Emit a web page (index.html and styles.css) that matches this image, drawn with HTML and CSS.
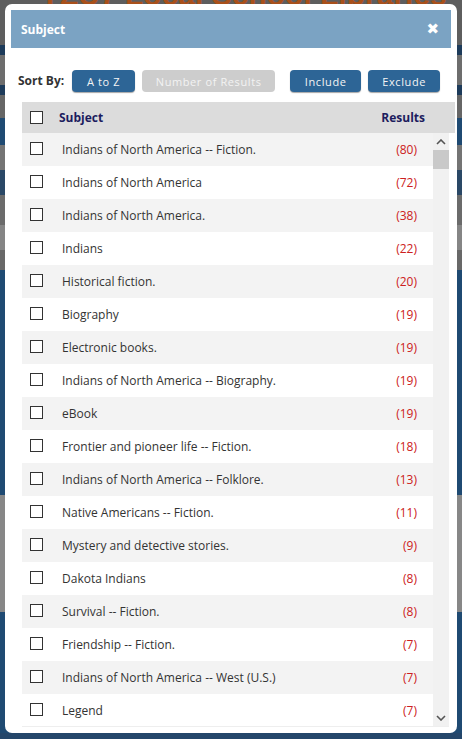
FILE: index.html
```html
<!DOCTYPE html>
<html lang="en">
<head>
    <meta charset="UTF-8">
    <title>Subject</title>
    <link rel="stylesheet" href="styles.css">
</head>
<body>
    <div class="page-title">YZU7 Local School Libraries</div>

    <div class="modal">
        <div class="modal-header">
            <span class="modal-title">Subject</span>
            <span class="modal-close">&#10006;</span>
        </div>

        <div class="sort-bar">
            <span class="sort-label">Sort By:</span>
            <button class="btn btn-az">A to Z</button>
            <button class="btn btn-muted">Number of Results</button>
            <button class="btn btn-include">Include</button>
            <button class="btn btn-exclude">Exclude</button>
        </div>

        <div class="facet-table">
            <div class="facet-head">
                <span class="check"></span>
                <span class="head-subject">Subject</span>
                <span class="head-results">Results</span>
            </div>

            <div class="facet-body">
                <ul class="facet-list">
                    <li class="facet-row"><span class="check"></span><span class="facet-name">Indians of North America -- Fiction.</span><span class="facet-count">(80)</span></li>
                    <li class="facet-row"><span class="check"></span><span class="facet-name">Indians of North America</span><span class="facet-count">(72)</span></li>
                    <li class="facet-row"><span class="check"></span><span class="facet-name">Indians of North America.</span><span class="facet-count">(38)</span></li>
                    <li class="facet-row"><span class="check"></span><span class="facet-name">Indians</span><span class="facet-count">(22)</span></li>
                    <li class="facet-row"><span class="check"></span><span class="facet-name">Historical fiction.</span><span class="facet-count">(20)</span></li>
                    <li class="facet-row"><span class="check"></span><span class="facet-name">Biography</span><span class="facet-count">(19)</span></li>
                    <li class="facet-row"><span class="check"></span><span class="facet-name">Electronic books.</span><span class="facet-count">(19)</span></li>
                    <li class="facet-row"><span class="check"></span><span class="facet-name">Indians of North America -- Biography.</span><span class="facet-count">(19)</span></li>
                    <li class="facet-row"><span class="check"></span><span class="facet-name">eBook</span><span class="facet-count">(19)</span></li>
                    <li class="facet-row"><span class="check"></span><span class="facet-name">Frontier and pioneer life -- Fiction.</span><span class="facet-count">(18)</span></li>
                    <li class="facet-row"><span class="check"></span><span class="facet-name">Indians of North America -- Folklore.</span><span class="facet-count">(13)</span></li>
                    <li class="facet-row"><span class="check"></span><span class="facet-name">Native Americans -- Fiction.</span><span class="facet-count">(11)</span></li>
                    <li class="facet-row"><span class="check"></span><span class="facet-name">Mystery and detective stories.</span><span class="facet-count">(9)</span></li>
                    <li class="facet-row"><span class="check"></span><span class="facet-name">Dakota Indians</span><span class="facet-count">(8)</span></li>
                    <li class="facet-row"><span class="check"></span><span class="facet-name">Survival -- Fiction.</span><span class="facet-count">(8)</span></li>
                    <li class="facet-row"><span class="check"></span><span class="facet-name">Friendship -- Fiction.</span><span class="facet-count">(7)</span></li>
                    <li class="facet-row"><span class="check"></span><span class="facet-name">Indians of North America -- West (U.S.)</span><span class="facet-count">(7)</span></li>
                    <li class="facet-row"><span class="check"></span><span class="facet-name">Legend</span><span class="facet-count">(7)</span></li>
                </ul>

                <div class="scrollbar">
                    <span class="scroll-arrow">
                        <svg width="10" height="6" viewBox="0 0 10 6"><polyline points="1,5 5,1 9,5" fill="none" stroke="#555" stroke-width="1.6"/></svg>
                    </span>
                    <span class="scroll-thumb"></span>
                    <span class="scroll-track"></span>
                    <span class="scroll-arrow">
                        <svg width="10" height="6" viewBox="0 0 10 6"><polyline points="1,1 5,5 9,1" fill="none" stroke="#555" stroke-width="1.6"/></svg>
                    </span>
                </div>
            </div>
        </div>
    </div>
</body>
</html>
```

FILE: styles.css
```css
* {
    margin: 0;
    padding: 0;
    box-sizing: border-box;
    font-family: 'Open Sans', 'Liberation Sans', sans-serif;
}

body {
    width: 462px;
    height: 739px;
    overflow: hidden;
    position: relative;
    padding: 4px 5px 6px;
    /* dimmed page behind the dialog */
    background: linear-gradient(to bottom,
        #5e5e5e 0, #5e5e5e 45px,
        #1d3b5a 45px, #1d3b5a 55px,
        #6d6d6d 55px, #6d6d6d 85px,
        #1d3b5a 85px, #1d3b5a 95px,
        #666 95px, #666 118px,
        #1f4a72 118px, #1f4a72 145px,
        #747474 145px, #747474 170px,
        #2a4866 170px, #2a4866 195px,
        #6b6b6b 195px, #6b6b6b 225px,
        #858585 225px, #858585 250px,
        #686868 250px, #686868 270px,
        #1f4a72 270px, #1f4a72 495px,
        #878787 495px, #878787 612px,
        #1f4a72 612px, #1f4a72 733px,
        #24466a 733px);
}

.page-title {
    position: absolute;
    top: -22px;
    left: 40px;
    font-family: 'Liberation Sans', sans-serif;
    font-weight: bold;
    font-size: 30px;
    color: #a9501a;
    white-space: nowrap;
}

.modal {
    position: relative;
    background-color: white;
    border-radius: 7px;
    height: 729px;
    padding: 6px 0;
    display: flex;
    flex-direction: column;
}

.modal-header {
    margin: 0 6px;
    height: 38px;
    background-color: #7ba3c3;
    display: flex;
    align-items: center;
    justify-content: space-between;
    padding: 0 12px 0 10px;
    color: white;
}

.modal-title {
    font-weight: bold;
    font-size: 12px;
}

.modal-close {
    font-size: 15px;
    font-weight: bold;
    font-family: 'DejaVu Sans', sans-serif;
}

.sort-bar {
    display: flex;
    padding: 22px 13px 0;
    height: 54px;
    align-items: flex-start;
}

.sort-label {
    font-weight: bold;
    font-size: 12px;
    color: #333;
    line-height: 22px;
    margin-right: 8px;
}

.btn {
    height: 22px;
    border: none;
    border-radius: 4px;
    background-color: #2d6596;
    color: #f4f4f4;
    font-size: 11px;
    letter-spacing: 0.6px;
    box-shadow: 0 1px 1px rgba(0,0,0,0.35);
}

.btn-az { width: 63px; }

.btn-muted {
    width: 133px;
    margin-left: 7px;
    background-color: #cdcdcd;
    color: #f3f3f3;
    box-shadow: none;
}

.btn-include {
    width: 71px;
    margin-left: 15px;
}

.btn-exclude {
    width: 72px;
    margin-left: 7px;
}

.facet-table {
    margin: 0 2px 0 17px;
}

.facet-head {
    height: 31px;
    background-color: #dcdcdc;
    display: flex;
    align-items: center;
    padding: 0 30px 0 8px;
    font-weight: bold;
    font-size: 12px;
    color: #1c1c5e;
}

.head-subject {
    margin-left: 16px;
    flex: 1;
}

.check {
    width: 13px;
    height: 13px;
    border: 1px solid #333;
    background: white;
    flex-shrink: 0;
}

.facet-body {
    display: flex;
    height: 594px;
    margin-right: 6px;
    border-bottom: 1px solid #eee;
}

.facet-list {
    list-style: none;
    flex: 1;
    overflow: hidden;
}

.facet-row {
    height: 33px;
    display: flex;
    align-items: center;
    padding: 0 16px 2px 8px;
    font-size: 12px;
    color: #333;
}

.facet-row:nth-child(odd) {
    background-color: #f3f3f3;
}

.facet-name {
    flex: 1;
    margin-left: 19px;
    padding-top: 2px;
}

.facet-count {
    color: #cc2020;
    padding-top: 2px;
}

.scrollbar {
    width: 16px;
    background-color: #f1f1f1;
    display: flex;
    flex-direction: column;
}

.scroll-arrow {
    height: 17px;
    display: flex;
    align-items: center;
    justify-content: center;
}

.scroll-thumb {
    height: 19px;
    background-color: #c9c9c9;
}

.scroll-track {
    flex: 1;
}
```
